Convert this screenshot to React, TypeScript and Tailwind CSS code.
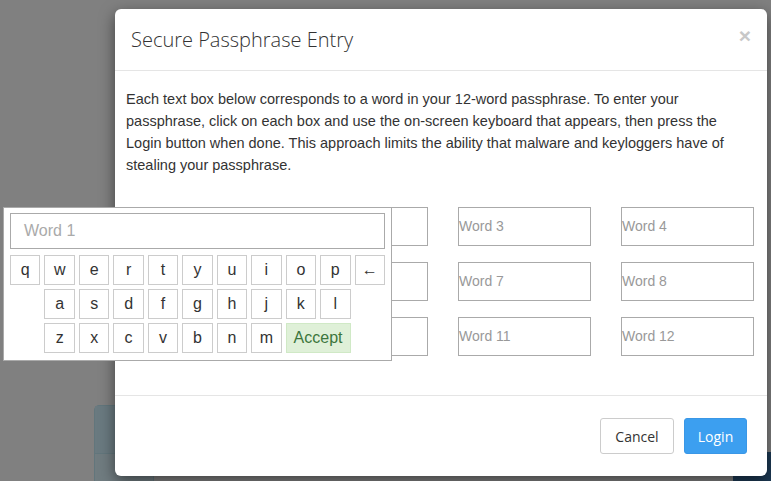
const row1 = ["q", "w", "e", "r", "t", "y", "u", "i", "o", "p"];
const row2 = ["a", "s", "d", "f", "g", "h", "j", "k", "l"];
const row3 = ["z", "x", "c", "v", "b", "n", "m"];

const words = Array.from({ length: 12 }, (_, i) => `Word ${i + 1}`);

function Key({ label }: { label: string }) {
  return (
    <div className="flex h-[30px] items-center justify-center border border-[#cccccc] bg-white text-[16px] text-[#333]">
      {label}
    </div>
  );
}

function Keyboard() {
  return (
    <div className="absolute left-[3px] top-[207px] w-[389px] border border-[#aaaaaa] bg-white px-[6px] pb-[7px] pt-[5px] font-['Liberation_Sans',Arial,sans-serif]">
      <div className="flex h-[36px] items-center border border-[#aaaaaa] pl-[13px] text-[16px] text-[#aaaaaa]">
        Word 1
      </div>
      <div className="mt-[6px] grid grid-cols-11 gap-[4px]">
        {row1.map((k) => (
          <Key key={k} label={k} />
        ))}
        <Key label="←" />
        <div />
        {row2.map((k) => (
          <Key key={k} label={k} />
        ))}
        <div />
        <div />
        {row3.map((k) => (
          <Key key={k} label={k} />
        ))}
        <div className="col-span-2 flex h-[30px] items-center justify-center border border-[#d0e9c6] bg-[#dff0d8] text-[16px] text-[#3c763d]">
          Accept
        </div>
      </div>
    </div>
  );
}

export default function App() {
  return (
    <div className="relative h-[481px] w-[771px] overflow-hidden bg-[#808080] font-['Liberation_Sans',Arial,sans-serif]">
      {/* page content behind the overlay */}
      <div className="absolute left-[94px] top-[405px] h-[90px] w-[60px] rounded-t-[5px] border border-[#62767c] bg-[#707c80]">
        <div className="h-[48px] border-b border-[#62767c] bg-[#6a7a80]" />
      </div>
      <div className="absolute left-[733px] top-[452px] h-[40px] w-[50px] bg-[#1d3a55]" />

      <div className="absolute left-[115px] top-[9px] flex h-[467px] w-[652px] flex-col rounded-[6px] bg-white shadow-[0_5px_15px_rgba(0,0,0,0.5)]">
        <div className="flex h-[62px] items-center justify-between border-b border-[#e5e5e5] pl-[16px] pr-[16px]">
          <h4 className="font-['Open_Sans',sans-serif] text-[20px] font-light text-[#333]">
            Secure Passphrase Entry
          </h4>
          <span className="-mt-[8px] text-[21px] font-bold leading-none text-[#c8c8c8]">×</span>
        </div>

        <div className="flex-1 pl-[11px] pr-[12px] pt-[17px]">
          <p className="w-[606px] text-[14.5px] leading-[22px] text-[#333]">
            Each text box below corresponds to a word in your 12-word passphrase. To enter your
            passphrase, click on each box and use the on-screen keyboard that appears, then press the
            Login button when done. This approach limits the ability that malware and keyloggers have of
            stealing your passphrase.
          </p>
          <div className="ml-[6px] mt-[31px] grid w-[622px] grid-cols-4 gap-x-[30px] gap-y-[16px]">
            {words.map((w) => (
              <div
                key={w}
                className="flex h-[39px] items-center border border-[#aaaaaa] text-[14px] text-[#999]"
              >
                {w}
              </div>
            ))}
          </div>
        </div>

        <div className="flex h-[81px] items-center justify-end gap-[10px] border-t border-[#e5e5e5] pr-[20px]">
          <button className="h-[36px] w-[74px] rounded-[3px] border border-[#cccccc] bg-white font-['Open_Sans',sans-serif] text-[14px] text-[#333]">
            Cancel
          </button>
          <button className="h-[36px] w-[63px] rounded-[3px] border border-[#3a97e6] bg-[#3c9ff0] font-['Open_Sans',sans-serif] text-[14px] text-white">
            Login
          </button>
        </div>
      </div>

      <Keyboard />
    </div>
  );
}
